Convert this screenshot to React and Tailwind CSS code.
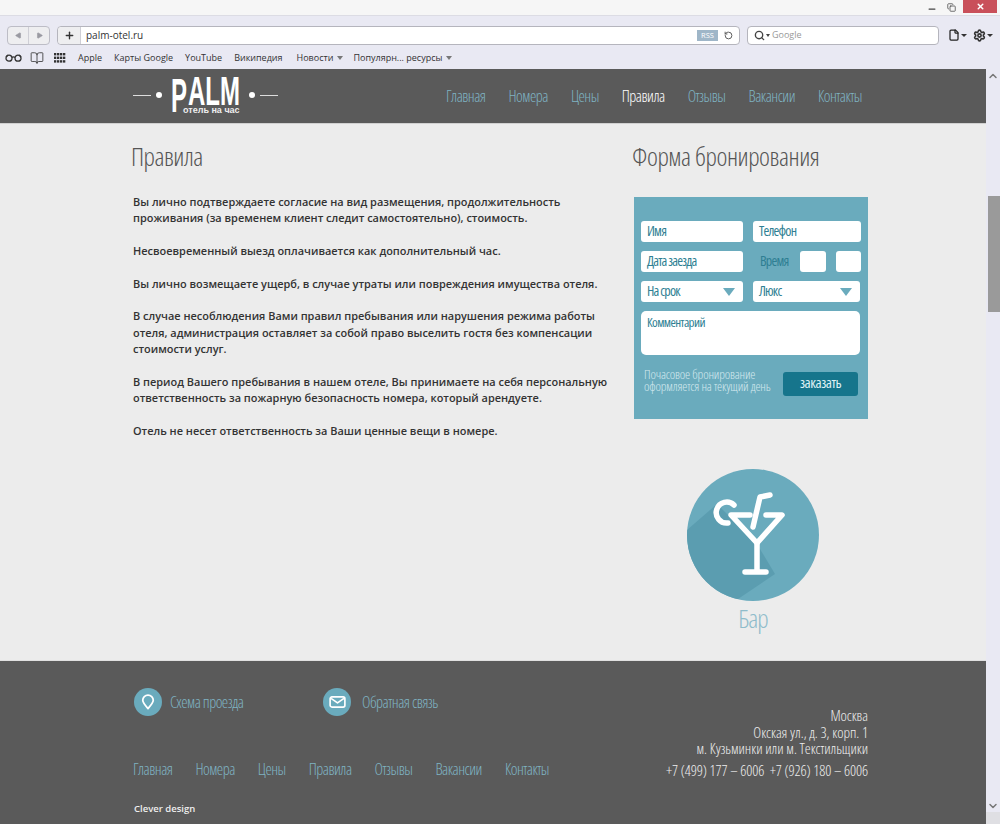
import { ChevronUp, ChevronDown, RotateCw, Search, File, Settings, BookOpen, Minus, X, Plus, Copy, Play } from "lucide-react";

const NAV = ["Главная", "Номера", "Цены", "Правила", "Отзывы", "Вакансии", "Контакты"];
const BOOKMARKS = ["Apple", "Карты Google", "YouTube", "Википедия"];

const RULES = [
  "Вы лично подтверждаете согласие на вид размещения, продолжительность проживания (за временем клиент следит самостоятельно), стоимость.",
  "Несвоевременный выезд оплачивается как дополнительный час.",
  "Вы лично возмещаете ущерб, в случае утраты или повреждения имущества отеля.",
  "В случае несоблюдения Вами правил пребывания или нарушения режима работы отеля, администрация оставляет за собой право выселить гостя без компенсации стоимости услуг.",
  "В период Вашего пребывания в нашем отеле, Вы принимаете на себя персональную ответственность за пожарную безопасность номера, который арендуете.",
  "Отель не несет ответственность за Ваши ценные вещи в номере.",
];

const COND = "font-['Open_Sans',sans-serif] [font-stretch:75%]";

function Field({ className, children }) {
  return (
    <div className={`h-[21px] bg-white rounded-[3px] flex items-center px-[6px] pb-[2px] text-[14px] tracking-[-0.8px] text-[#2f7f93] ${COND} ${className}`}>
      {children}
    </div>
  );
}

function Caret() {
  return <span className="ml-auto mr-[2px] mt-[2px] w-0 h-0 border-x-[6px] border-x-transparent border-t-[8px] border-t-[#6aabbd]" />;
}

function Toolbar() {
  return (
    <div className="h-[69px] bg-[#e9e9f3] font-['Open_Sans',sans-serif] text-[#333]">
      <div className="h-[16px] bg-[#f6f6f6] border-b border-[#dcdce4] flex justify-end items-start">
        <Minus size={10} strokeWidth={3} className="mt-[4px] mr-[10px] text-[#444]" />
        <Copy size={9} strokeWidth={2} className="mt-[3px] mr-[7px] text-[#444]" />
        <div className="w-[34px] h-[13px] mr-[3px] bg-[#c9505a] flex items-center justify-center">
          <X size={9} strokeWidth={4} className="text-white" />
        </div>
      </div>
      <div className="h-[32px] flex items-center pl-[7px] pt-[6px]">
        <div className="w-[43px] h-[19px] rounded-[4px] border border-[#bdbdc6] bg-[#eeeef0] flex">
          <div className="w-[21px] border-r border-[#cfcfd6] flex items-center justify-center">
            <Play size={7} className="rotate-180 text-[#9a9aa2] fill-[#9a9aa2]" />
          </div>
          <div className="flex-1 flex items-center justify-center">
            <Play size={7} className="text-[#9a9aa2] fill-[#9a9aa2]" />
          </div>
        </div>
        <div className="ml-[7px] w-[683px] h-[19px] rounded-[4px] border border-[#b5b5bd] bg-white flex items-center">
          <div className="w-[23px] h-full bg-[#eeeef0] rounded-l-[4px] border-r border-[#cfcfd6] flex items-center justify-center">
            <Plus size={11} strokeWidth={3} className="text-[#333]" />
          </div>
          <span className="ml-[5px] text-[10px]">palm-otel.ru</span>
          <span className="ml-auto w-[21px] text-center h-[11px] bg-[#9fb6c8] text-white text-[7.5px] leading-[11px]">RSS</span>
          <RotateCw size={9} strokeWidth={2.5} className="mx-[6px] -scale-x-100 text-[#555]" />
        </div>
        <div className="ml-[7px] w-[192px] h-[19px] rounded-[4px] border border-[#b5b5bd] bg-white flex items-center pl-[6px]">
          <Search size={11} strokeWidth={3} className="text-[#444]" />
          <span className="ml-[1px] w-0 h-0 border-x-[2px] border-x-transparent border-t-[3px] border-t-[#444]" />
          <span className="ml-[2px] text-[9px] text-[#999]">Google</span>
        </div>
        <File size={12} strokeWidth={2.5} className="ml-[9px] text-[#222]" />
        <span className="ml-[1px] w-0 h-0 border-x-[3px] border-x-transparent border-t-[3px] border-t-[#333]" />
        <Settings size={13} strokeWidth={3} className="ml-[6px] text-[#333]" />
        <span className="ml-[1px] w-0 h-0 border-x-[3px] border-x-transparent border-t-[3px] border-t-[#333]" />
      </div>
      <div className="h-[20px] flex items-center pl-[5px] text-[9px]">
        <svg viewBox="0 0 17 8" className="w-[17px] h-[8px]" fill="none" stroke="#333" strokeWidth="1.3">
          <circle cx="4" cy="4.2" r="3" />
          <circle cx="13" cy="4.2" r="3" />
          <path d="M7 3.5 C8 2.6 9 2.6 10 3.5 M1 3 L3 1 M16 3 L14 1" />
        </svg>
        <BookOpen size={14} strokeWidth={1.4} className="ml-[8px]" />
        <svg viewBox="0 0 12 10" className="ml-[10px] w-[12px] h-[10px]" fill="#333">
          {[0, 3.6, 7.2].map((y) =>
            [0, 3, 6, 9].map((x) => <rect key={`${x}-${y}`} x={x} y={y} width="2.3" height="2.4" />)
          )}
        </svg>
        <div className="flex ml-[12px] gap-[12px]">
          {BOOKMARKS.map((b) => (
            <span key={b}>{b}</span>
          ))}
        </div>
        <span className="ml-[14px]">Новости</span>
        <span className="ml-[4px] w-0 h-0 border-x-[3px] border-x-transparent border-t-[4px] border-t-[#777]" />
        <span className="ml-[10px]">Популярн... ресурсы</span>
        <span className="ml-[4px] w-0 h-0 border-x-[3px] border-x-transparent border-t-[4px] border-t-[#777]" />
      </div>
    </div>
  );
}

function Logo() {
  return (
    <div className="flex items-center text-white -mt-[2px]">
      <div className="w-[18px] h-px bg-[#ddd]" />
      <div className="ml-[5px] w-[6px] h-[6px] rounded-full bg-white" />
      <div className="ml-[9px] relative w-[71px] h-[36px] font-['Liberation_Sans',sans-serif] font-bold">
        <span className="absolute left-0 -top-[9px] text-[48px] leading-[55px] origin-left scale-x-[0.5]">P</span>
        <span className="absolute left-[17px] -top-[9px] text-[40px] leading-[46px] origin-left scale-x-[0.6]">ALM</span>
        <span className="absolute left-[12px] top-[28px] text-[9px] leading-[11px] whitespace-nowrap text-[#eee]">отель на час</span>
      </div>
      <div className="ml-[7px] w-[6px] h-[6px] rounded-full bg-white" />
      <div className="ml-[5px] w-[18px] h-px bg-[#ddd]" />
    </div>
  );
}

function BookingForm() {
  return (
    <div className={`w-[234px] h-[222px] mt-[24px] bg-[#6aabbd] px-[7px] pt-[24px] ${COND}`}>
      <div className="flex gap-[10px]">
        <Field className="w-[102px]">Имя</Field>
        <Field className="w-[108px]">Телефон</Field>
      </div>
      <div className="flex gap-[10px] mt-[9px]">
        <Field className="w-[102px]">Дата заезда</Field>
        <div className="w-[108px] h-[21px] flex items-center">
          <span className="ml-[7px] pb-[2px] text-[14px] tracking-[-0.8px] text-[#2f7f93]">Время</span>
          <div className="ml-auto w-[26px] h-[21px] bg-white rounded-[3px]" />
          <div className="ml-[10px] w-[25px] h-[21px] bg-white rounded-[3px]" />
        </div>
      </div>
      <div className="flex gap-[10px] mt-[9px]">
        <Field className="w-[102px]">На срок<Caret /></Field>
        <Field className="w-[107px]">Люкс<Caret /></Field>
      </div>
      <div className="mt-[9px] w-[219px] h-[44px] bg-white rounded-[5px] px-[6px] text-[13px] tracking-[-0.6px] leading-[22px] text-[#2f7f93]">
        Комментарий
      </div>
      <div className="flex items-center mt-[17px]">
        <p className="ml-[3px] -mt-[8px] text-[13px] tracking-[-0.17px] font-light leading-[12px] text-[#d3e8ee] whitespace-nowrap">
          Почасовое бронирование<br />оформляется на текущий день
        </p>
        <div className="ml-auto mr-[3px] w-[75px] h-[24px] rounded-[3px] bg-[#16758c] text-center text-[15px] tracking-[-0.5px] leading-[21px] text-[#dff1f5]">
          заказать
        </div>
      </div>
    </div>
  );
}

function BarIcon() {
  return (
    <svg viewBox="0 0 132 132" className="w-[132px] h-[132px]">
      <defs>
        <clipPath id="bar-clip"><circle cx="66" cy="66" r="66" /></clipPath>
      </defs>
      <circle cx="66" cy="66" r="66" fill="#6aabbd" />
      <path d="M0 61 L30 35 L70 75 L88 105 L51 130 L0 132 Z" fill="#5b9db0" clipPath="url(#bar-clip)" />
      <g fill="none" stroke="#fff" strokeWidth="5.5" strokeLinecap="round" strokeLinejoin="round">
        <path d="M63 46 H44 L70 74 L95 46 H79" />
        <path d="M70 74 V103 M58 103 H79" />
        <path d="M66 58 L73 28 L83 26" />
        <path d="M47 36 A 10.5 10.5 0 1 0 41 54" />
      </g>
    </svg>
  );
}

function FootLink({ icon, label, className, gap }) {
  return (
    <div className={`flex items-center ${className}`}>
      <div className="w-[28px] h-[28px] rounded-full bg-[#6aabbd] flex items-center justify-center">{icon}</div>
      <span className={`${gap} text-[16px] font-light tracking-[-0.5px] text-[#7fb3c2] ${COND}`}>{label}</span>
    </div>
  );
}

export default function App() {
  return (
    <div className="w-[1000px] h-[824px] overflow-hidden bg-[#e9e9f3] font-['Open_Sans',sans-serif]">
      <Toolbar />
      <div className="flex h-[755px]">
        <div className="w-[986px] flex flex-col">
          <header className="h-[55px] bg-[#5a5a5a] border-b border-[#d0d0d0] pl-[133px] pr-[124px] flex items-center justify-between">
            <Logo />
            <nav className={`flex gap-[23px] text-[16px] font-light tracking-[-0.5px] ${COND}`}>
              {NAV.map((n) => (
                <span key={n} className={n === "Правила" ? "text-white" : "text-[#7fb3c2]"}>{n}</span>
              ))}
            </nav>
          </header>

          <main className="h-[537px] bg-[#ececec] border-b border-[#e0e0e0] pl-[131px] flex">
            <div className="w-[503px]">
              <h1 className={`mt-[15px] text-[26px] font-light tracking-[-0.5px] leading-[34px] text-[#555] ${COND}`}>Правила</h1>
              <div className="mt-[21px] ml-[2px] w-[480px] text-[10.95px] leading-[16.3px] font-semibold text-[#333] flex flex-col gap-[16.4px]">
                {RULES.map((r) => (
                  <p key={r}>{r}</p>
                ))}
              </div>
            </div>
            <div className="w-[240px]">
              <h2 className={`-ml-[2px] mt-[15px] text-[26px] font-light tracking-[-0.45px] leading-[34px] whitespace-nowrap text-[#555] ${COND}`}>Форма бронирования</h2>
              <BookingForm />
              <div className="mt-[50px] ml-[53px] w-[132px] flex flex-col items-center">
                <BarIcon />
                <span className={`mt-[2px] text-[26px] font-light tracking-[-1px] leading-[30px] text-[#8fbccb] ${COND}`}>Бар</span>
              </div>
            </div>
          </main>

          <footer className="flex-1 bg-[#5a5a5a] pl-[133px] flex">
            <div className="w-[500px]">
              <div className="flex mt-[27px] ml-[1px]">
                <FootLink
                  className="w-[189px]"
                  gap="ml-[8px]"
                  label="Схема проезда"
                  icon={
                    <svg viewBox="0 0 16 18" className="w-[14px] h-[16px]" fill="none" stroke="#fff" strokeWidth="2" strokeLinejoin="round">
                      <path d="M8 16.5 C4 12 2 9.5 2 7 A6 6 0 0 1 14 7 C14 9.5 12 12 8 16.5 Z" />
                    </svg>
                  }
                />
                <FootLink
                  gap="ml-[11px]"
                  label="Обратная связь"
                  icon={
                    <svg viewBox="0 0 18 13" className="w-[17px] h-[12px]" fill="none" stroke="#fff" strokeWidth="1.8" strokeLinejoin="round">
                      <rect x="1" y="1" width="16" height="11" rx="2" />
                      <path d="M2 2.5 L9 7.5 L16 2.5" />
                    </svg>
                  }
                />
              </div>
              <nav className={`flex gap-[23px] mt-[41px] text-[16px] font-light tracking-[-0.5px] text-[#7fb3c2] ${COND}`}>
                {NAV.map((n) => (
                  <span key={n}>{n}</span>
                ))}
              </nav>
              <p className="mt-[21px] ml-[1px] text-[9.5px] font-semibold text-[#eee]">Clever design</p>
            </div>
            <div className={`w-[235px] mt-[46px] text-right text-[15px] font-light tracking-[-0.05px] leading-[16.5px] text-[#eee] ${COND}`}>
              <p>Москва</p>
              <p>Окская ул., д. 3, корп. 1</p>
              <p>м. Кузьминки или м. Текстильщики</p>
              <p className="mt-[5px] tracking-[-0.1px] whitespace-nowrap">+7 (499) 177 – 6006&nbsp; +7 (926) 180 – 6006</p>
            </div>
          </footer>
        </div>

        <aside className="w-[14px] flex flex-col items-center">
          <ChevronUp size={12} strokeWidth={3} className="mt-[1px] text-[#777]" />
          <div className="mt-[114px] ml-[2px] w-[12px] h-[116px] bg-[#9a9a9a]" />
          <ChevronDown size={12} strokeWidth={3} className="mt-[488px] text-[#777]" />
          <div className="flex-1 w-full bg-[#dfdfe3]" />
        </aside>
      </div>
    </div>
  );
}
